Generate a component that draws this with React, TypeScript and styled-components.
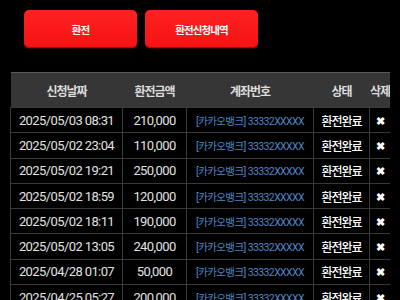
import React from "react";
import styled, { createGlobalStyle } from "styled-components";

const Global = createGlobalStyle`
  html, body { margin: 0; padding: 0; background: #000; }
  body { font-family: Roboto, "Noto Sans CJK KR", sans-serif; color: #e6e6e6; }
`;

const Page = styled.div`
  width: 400px;
  height: 300px;
  overflow: hidden;
  background: #000;
`;

const ButtonBar = styled.div`
  display: flex;
  gap: 8px;
  padding: 10px 0 0 24px;
`;

const RedButton = styled.button`
  width: 113px;
  height: 38px;
  border: none;
  border-radius: 5px;
  background: linear-gradient(#ff2222, #f51212);
  box-shadow: inset 0 -1px 0 #c00000, 0 1px 1px rgba(255, 0, 0, 0.2);
  color: #fff;
  font-family: "Noto Sans CJK KR", sans-serif;
  font-weight: 700;
  font-size: 10.5px;
  letter-spacing: -0.9px;
  padding: 0;
`;

const TableWrap = styled.div`
  margin: 24px 0 0 10px;
  width: 380px;
  overflow: hidden;
`;

const Table = styled.table`
  width: 380px;
  table-layout: fixed;
  border-collapse: collapse;
`;

const Head = styled.th`
  height: 34px;
  padding: 0;
  background: #363636;
  border-top: 1px solid #5a5a5a;
  color: #dcdcdc;
  font-family: "Noto Sans CJK KR", sans-serif;
  font-weight: 700;
  font-size: 12px;
  letter-spacing: -1.1px;
  white-space: nowrap;
  overflow: visible;
  text-align: center;
`;

const Cell = styled.td<{ $kind?: "num" | "acct" | "status" | "del" }>`
  height: 24.3px;
  padding: 0;
  border: 1px solid #3a3a3a;
  background: #000;
  text-align: center;
  white-space: nowrap;
  overflow: visible;
  color: ${(p) =>
    p.$kind === "acct" ? "#4f86c4" : p.$kind === "status" || p.$kind === "del" ? "#fff" : "#e2e2e2"};
  font-family: ${(p) =>
    p.$kind === "status" ? '"Noto Sans CJK KR", sans-serif' : 'Roboto, "Noto Sans CJK KR", sans-serif'};
  font-size: ${(p) => (p.$kind === "acct" ? "10.5px" : p.$kind === "status" ? "12px" : "13px")};
  letter-spacing: ${(p) =>
    p.$kind === "acct" ? "-0.6px" : p.$kind === "status" ? "-1px" : "-0.6px"};
  font-weight: ${(p) => (p.$kind === "del" ? 900 : p.$kind === "status" ? 500 : 400)};
`;

const DelIcon = styled.span`
  display: inline-block;
  font-size: 11px;
  line-height: 1;
  color: #fff;
`;

const rows = [
  ["2025/05/03 08:31", "210,000"],
  ["2025/05/02 23:04", "110,000"],
  ["2025/05/02 19:21", "250,000"],
  ["2025/05/02 18:59", "120,000"],
  ["2025/05/02 18:11", "190,000"],
  ["2025/05/02 13:05", "240,000"],
  ["2025/04/28 01:07", "50,000"],
  ["2025/04/25 05:27", "200,000"],
];

export default function App() {
  return (
    <Page>
      <Global />
      <ButtonBar>
        <RedButton>환전</RedButton>
        <RedButton>환전신청내역</RedButton>
      </ButtonBar>
      <TableWrap>
        <Table>
          <colgroup>
            <col style={{ width: 112 }} />
            <col style={{ width: 64 }} />
            <col style={{ width: 127 }} />
            <col style={{ width: 56 }} />
            <col style={{ width: 21 }} />
          </colgroup>
          <thead>
            <tr>
              <Head>신청날짜</Head>
              <Head>환전금액</Head>
              <Head>계좌번호</Head>
              <Head>상태</Head>
              <Head>삭제</Head>
            </tr>
          </thead>
          <tbody>
            {rows.map(([d, a]) => (
              <tr key={d}>
                <Cell $kind="num">{d}</Cell>
                <Cell $kind="num">{a}</Cell>
                <Cell $kind="acct">[카카오뱅크] 33332XXXXX</Cell>
                <Cell $kind="status">환전완료</Cell>
                <Cell $kind="del">
                  <DelIcon>✖</DelIcon>
                </Cell>
              </tr>
            ))}
          </tbody>
        </Table>
      </TableWrap>
    </Page>
  );
}
